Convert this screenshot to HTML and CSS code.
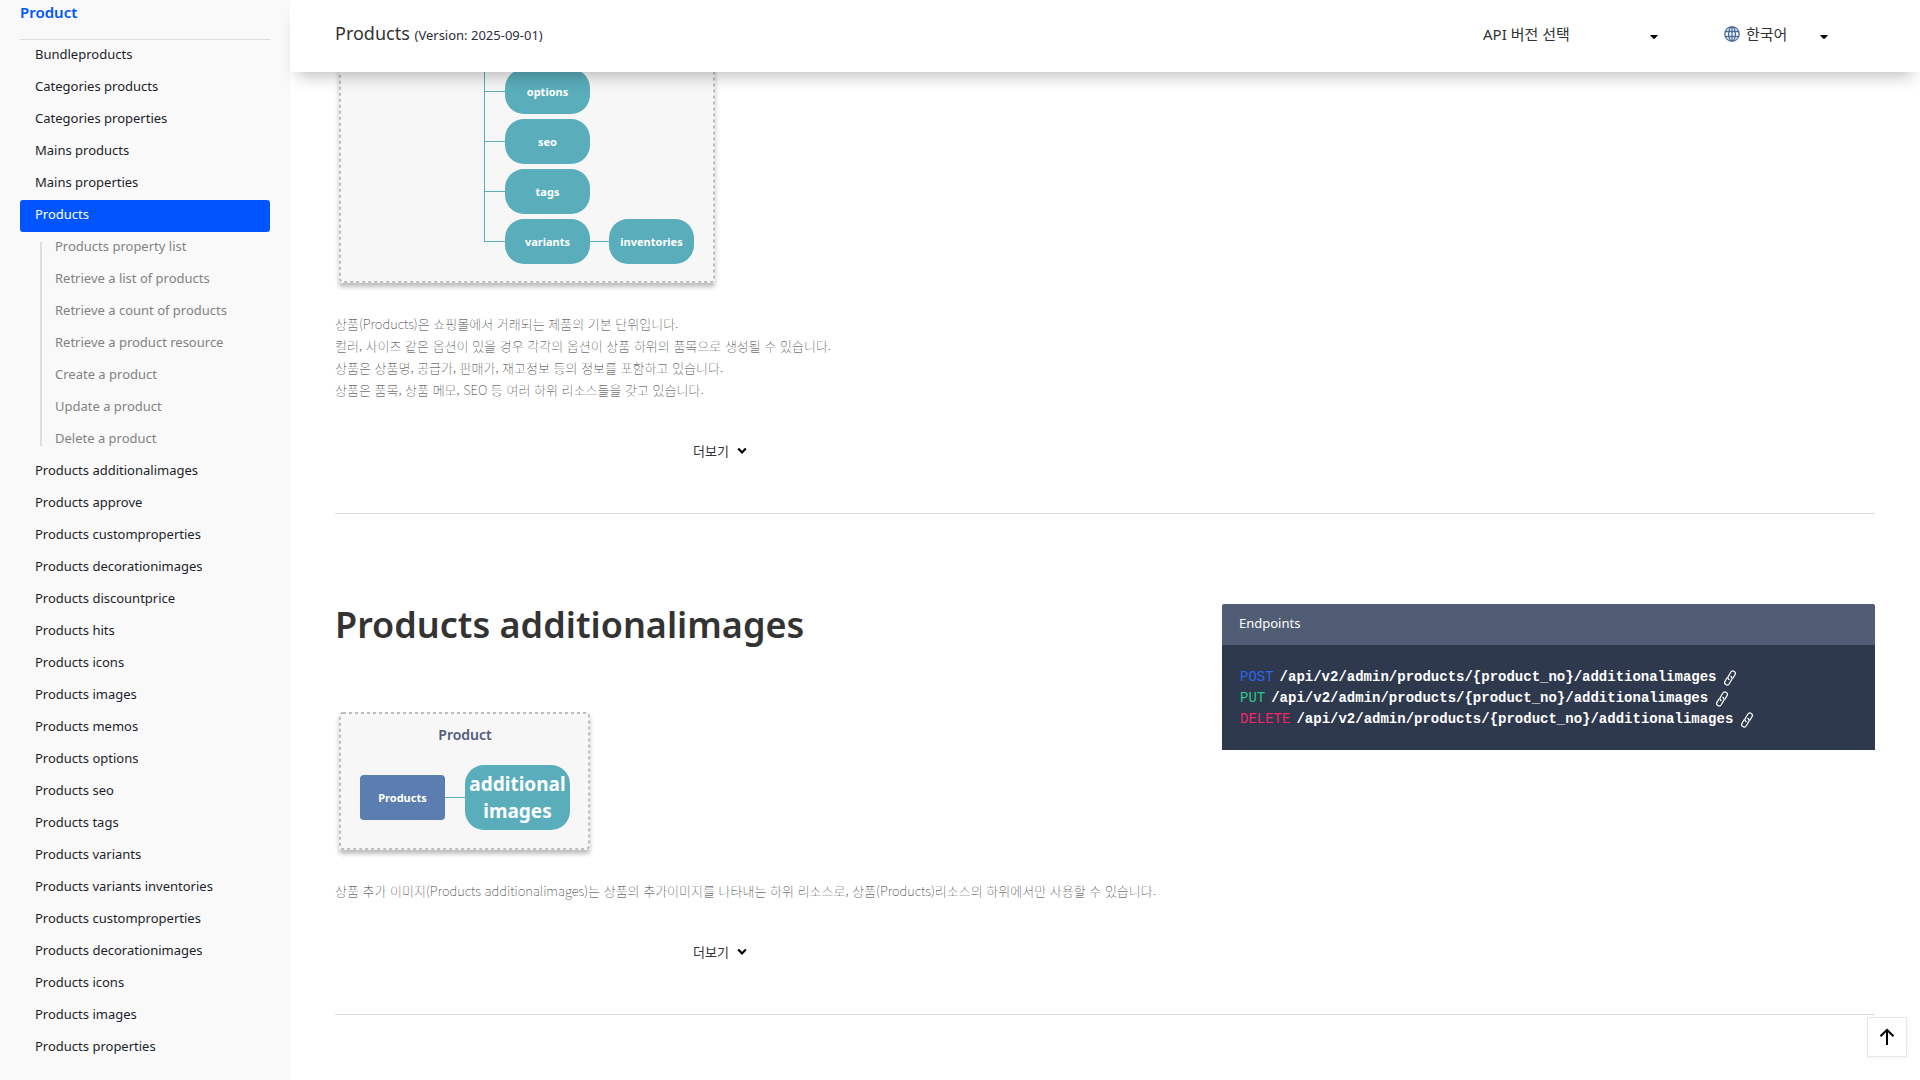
FILE: index.html
```html
<!DOCTYPE html>
<html lang="ko">
<head>
<meta charset="utf-8">
<meta name="viewport" content="width=device-width, initial-scale=1">
<title>Products (Version: 2025-09-01)</title>
<link rel="stylesheet" href="styles.css">
</head>
<body>
<svg class="defs" aria-hidden="true">
  <symbol id="link" viewBox="0 0 12 16">
    <g fill="none" stroke="currentColor" stroke-width="1.2" stroke-linecap="round" stroke-linejoin="round">
      <path d="M5.200 9.600C3.900 9 3.600 7.700 4.300 6.400L6.600 2.500C7.500 1 9 .7 10.200 1.400C11.400 2.100 11.700 3.500 10.900 4.900L8.900 8.200"/>
      <path d="M6.800 6.400C8.100 7 8.400 8.300 7.700 9.600L5.400 13.500C4.500 15 3 15.300 1.800 14.600C.6 13.900 .3 12.500 1.100 11.100L3.100 7.800"/>
    </g>
  </symbol>
  <symbol id="chevron" viewBox="0 0 10 8"><path d="M1.200 1.500L5 5.500L8.800 1.500" fill="none" stroke="currentColor" stroke-width="2.200"/></symbol>
  <symbol id="caret" viewBox="0 0 8 4"><path d="M0 0H8L5 3.500Q4 4.300 3 3.500Z" fill="currentColor"/></symbol>
</svg>
<div class="layout">
  <nav class="sidebar" aria-label="Product">
    <h2 class="sidebar-title"><a href="#">Product</a></h2>
    <ul class="menu">
      <li><a href="#">Bundleproducts</a></li>
      <li><a href="#">Categories products</a></li>
      <li><a href="#">Categories properties</a></li>
      <li><a href="#">Mains products</a></li>
      <li><a href="#">Mains properties</a></li>
      <li>
        <a class="active" href="#">Products</a>
        <ul class="submenu">
          <li><a href="#">Products property list</a></li>
          <li><a href="#">Retrieve a list of products</a></li>
          <li><a href="#">Retrieve a count of products</a></li>
          <li><a href="#">Retrieve a product resource</a></li>
          <li><a href="#">Create a product</a></li>
          <li><a href="#">Update a product</a></li>
          <li><a href="#">Delete a product</a></li>
        </ul>
      </li>
      <li><a href="#">Products additionalimages</a></li>
      <li><a href="#">Products approve</a></li>
      <li><a href="#">Products customproperties</a></li>
      <li><a href="#">Products decorationimages</a></li>
      <li><a href="#">Products discountprice</a></li>
      <li><a href="#">Products hits</a></li>
      <li><a href="#">Products icons</a></li>
      <li><a href="#">Products images</a></li>
      <li><a href="#">Products memos</a></li>
      <li><a href="#">Products options</a></li>
      <li><a href="#">Products seo</a></li>
      <li><a href="#">Products tags</a></li>
      <li><a href="#">Products variants</a></li>
      <li><a href="#">Products variants inventories</a></li>
      <li><a href="#">Products customproperties</a></li>
      <li><a href="#">Products decorationimages</a></li>
      <li><a href="#">Products icons</a></li>
      <li><a href="#">Products images</a></li>
      <li><a href="#">Products properties</a></li>
    </ul>
  </nav>
  <div class="page">
    <header class="topbar">
      <h1 class="topbar-title">Products <small>(Version: 2025-09-01)</small></h1>
      <div class="picker picker-version">
        <select aria-label="API 버전 선택"><option>API 버전 선택</option></select>
        <svg class="caret" aria-hidden="true"><use href="#caret"/></svg>
      </div>
      <div class="picker picker-language">
        <svg class="globe" viewBox="0 0 16 16" aria-hidden="true"><g fill="none" stroke="currentColor" stroke-width="1.300"><circle cx="8" cy="8" r="7.200"/><ellipse cx="8" cy="8" rx="3.400" ry="7.200"/><path d="M8 .8V15.200M1.300 5.500H14.700M1.300 10.500H14.700"/></g></svg>
        <select aria-label="언어"><option>한국어</option></select>
        <svg class="caret" aria-hidden="true"><use href="#caret"/></svg>
      </div>
    </header>
    <main class="content">
      <section class="section">
        <div class="diagram diagram-tree">
          <svg class="frame" aria-hidden="true"><rect x="1" y="1" rx="3"/></svg>
          <ul class="tree">
            <li><span class="node">options</span></li>
            <li><span class="node">seo</span></li>
            <li><span class="node">tags</span></li>
            <li><span class="node">variants</span><i class="wire"></i><span class="node">inventories</span></li>
          </ul>
        </div>
        <p class="desc">상품(Products)은 쇼핑몰에서 거래되는 제품의 기본 단위입니다.<br>컬러, 사이즈 같은 옵션이 있을 경우 각각의 옵션이 상품 하위의 품목으로 생성될 수 있습니다.<br>상품은 상품명, 공급가, 판매가, 재고정보 등의 정보를 포함하고 있습니다.<br>상품은 품목, 상품 메모, SEO 등 여러 하위 리소스들을 갖고 있습니다.</p>
        <div class="more"><button type="button">더보기<svg aria-hidden="true"><use href="#chevron"/></svg></button></div>
      </section>
      <section class="section section-split">
        <div>
          <h2 class="heading">Products additionalimages</h2>
          <div class="diagram diagram-pair">
            <svg class="frame" aria-hidden="true"><rect x="1" y="1" rx="3"/></svg>
            <p class="diagram-title">Product</p>
            <div class="pair"><span class="node node-root">Products</span><i class="wire"></i><span class="node node-large">additional<br>images</span></div>
          </div>
          <p class="desc">상품 추가 이미지(Products additionalimages)는 상품의 추가이미지를 나타내는 하위 리소스로, 상품(Products)리소스의 하위에서만 사용할 수 있습니다.</p>
        </div>
        <aside class="endpoints">
          <h3>Endpoints</h3>
          <ul>
            <li><span class="post">POST</span> <a href="#">/api/v2/admin/products/{product_no}/additionalimages<svg aria-hidden="true"><use href="#link"/></svg></a></li>
            <li><span class="put">PUT</span> <a href="#">/api/v2/admin/products/{product_no}/additionalimages<svg aria-hidden="true"><use href="#link"/></svg></a></li>
            <li><span class="delete">DELETE</span> <a href="#">/api/v2/admin/products/{product_no}/additionalimages<svg aria-hidden="true"><use href="#link"/></svg></a></li>
          </ul>
        </aside>
        <div class="more"><button type="button">더보기<svg aria-hidden="true"><use href="#chevron"/></svg></button></div>
      </section>
    </main>
  </div>
</div>
<button class="to-top" type="button" aria-label="맨 위로"><svg viewBox="0 0 16 18" aria-hidden="true"><path d="M8 17V2M1.500 8.200L8 1.800L14.500 8.200" fill="none" stroke="currentColor" stroke-width="2"/></svg></button>
</body>
</html>
```
FILE: styles.css
```css
* { box-sizing: border-box; }
body {
  margin: 0;
  background: #fff;
  color: #333;
  font: 13px/22px "Noto Sans", "Noto Sans CJK KR", sans-serif;
}
h1, h2, h3, p, ul { margin: 0; padding: 0; font-weight: 400; }
ul { list-style: none; }
a { color: inherit; text-decoration: none; }
button, select { font: inherit; color: inherit; border: 0; background: none; padding: 0; cursor: pointer; }
.defs { display: none; }

.layout { display: flex; min-height: 100vh; }

.sidebar { flex: 0 0 290px; padding: 0 20px 16px; background: #f9f9f9; }
.sidebar-title {
  height: 40px;
  border-bottom: 1px solid #dcdcdc;
  color: #0055ff;
  font-size: 15px;
  font-weight: 600;
  line-height: 24px;
}
.menu a { display: block; padding: 0 15px 4px; line-height: 28px; color: #1c1f2b; }
.menu .active { background: #0055ff; color: #fff; border-radius: 3px; }
.submenu { position: relative; }
.submenu::before { content: ""; position: absolute; left: 20px; top: 10px; bottom: 10px; width: 2px; background: #dedede; }
.menu .submenu a { padding-left: 35px; color: #828282; }

.page { flex: 1; min-width: 0; }
.topbar {
  position: sticky;
  top: 0;
  z-index: 2;
  display: flex;
  align-items: center;
  height: 72px;
  padding: 0 92px 4px 45px;
  background: #fff;
  box-shadow: 0 12px 16px -8px rgba(0, 0, 0, .26);
}
.topbar-title { flex: 1; font-size: 18px; }
.topbar-title small { font-size: 13px; color: #2b2d3c; }
.picker { display: flex; align-items: center; font-size: 15px; }
.picker select { appearance: none; flex: 1; }
.picker-version { width: 175px; margin-right: 66px; }
.picker-language { width: 104px; }
.caret { width: 8px; height: 4px; margin-top: 6px; color: #000; }
.globe { width: 16px; height: 16px; margin-right: 6px; color: #4a6a9c; }

.content { padding: 0 45px; }
.section { border-bottom: 1px solid #ddd; }
.diagram {
  position: relative;
  margin-left: 4px;
  border-radius: 3px;
  background: #f7f7f7;
  box-shadow: 0 4px 4px rgba(0, 0, 0, .25);
}
.frame { position: absolute; inset: 0; width: 100%; height: 100%; }
.frame rect {
  width: calc(100% - 2px);
  height: calc(100% - 2px);
  fill: none;
  stroke: #aaabb3;
  stroke-width: 1.500;
  stroke-dasharray: 3 3;
}
.diagram-tree { width: 376px; margin-top: -16px; padding: 13px 0 19px 166px; }
.tree { position: relative; display: grid; gap: 5px; }
.tree::before { content: ""; position: absolute; left: -21px; top: 0; bottom: 22px; width: 1px; background: #5aaebc; }
.tree li { position: relative; display: flex; align-items: center; }
.tree li::before { content: ""; position: absolute; left: -21px; bottom: 22px; width: 21px; height: 1px; background: #5aaebc; }
.wire { width: 20px; height: 1px; background: #5aaebc; }
.tree .wire { width: 19px; }
.node {
  display: flex;
  align-items: center;
  justify-content: center;
  width: 85px;
  height: 45px;
  border-radius: 19px;
  background: #5aaebc;
  color: #fff;
  font-size: 11px;
  font-weight: 700;
  text-align: center;
}
.node-root { border-radius: 4px; background: #5c7db0; }
.node-large { width: 105px; height: 65px; font-size: 19px; line-height: 27px; }

.desc { margin-top: 30px; color: #333; font-family: "Noto Sans CJK KR", sans-serif; font-weight: 100; }
.more { display: flex; justify-content: center; width: 50%; padding: 39px 0 51px; }
.more button { display: flex; align-items: center; gap: 8px; }
.more svg { width: 10px; height: 8px; color: #000; }

.section-split { display: grid; grid-template-columns: 887fr 653fr; padding-top: 89px; }
.section-split .more { grid-column: 1 / -1; }
.heading { font-size: 36px; font-weight: 600; line-height: 44px; }
.diagram-pair { width: 251px; margin-top: 65px; padding: 12px 20px 20px 21px; }
.diagram-title { color: #515c7b; font-size: 14px; font-weight: 600; text-align: center; }
.pair { display: flex; align-items: center; margin-top: 19px; }

.endpoints { align-self: start; margin-top: 1px; overflow: hidden; border-radius: 3px 3px 0 0; background: #2f394e; color: #fff; }
.endpoints h3 { height: 41px; padding: 0 17px; background: #515d74; font-size: 13px; line-height: 38px; }
.endpoints ul { padding: 22px 18px 20px; font: 14px/21px "Liberation Mono", monospace; }
.endpoints li { display: flex; gap: 6px; }
.endpoints a { display: flex; align-items: center; gap: 8px; font-weight: 700; }
.endpoints svg { width: 12px; height: 16px; }
.post { color: #2a66f0; }
.put { color: #2dc98a; }
.delete { color: #f5246b; }

.to-top {
  position: fixed;
  right: 13px;
  bottom: 23px;
  display: grid;
  place-items: center;
  width: 40px;
  height: 40px;
  border: 1px solid #e8e8e8;
  background: #fff;
  box-shadow: 0 1px 4px rgba(0, 0, 0, .06);
  color: #000;
}
.to-top svg { width: 16px; height: 18px; }
```
